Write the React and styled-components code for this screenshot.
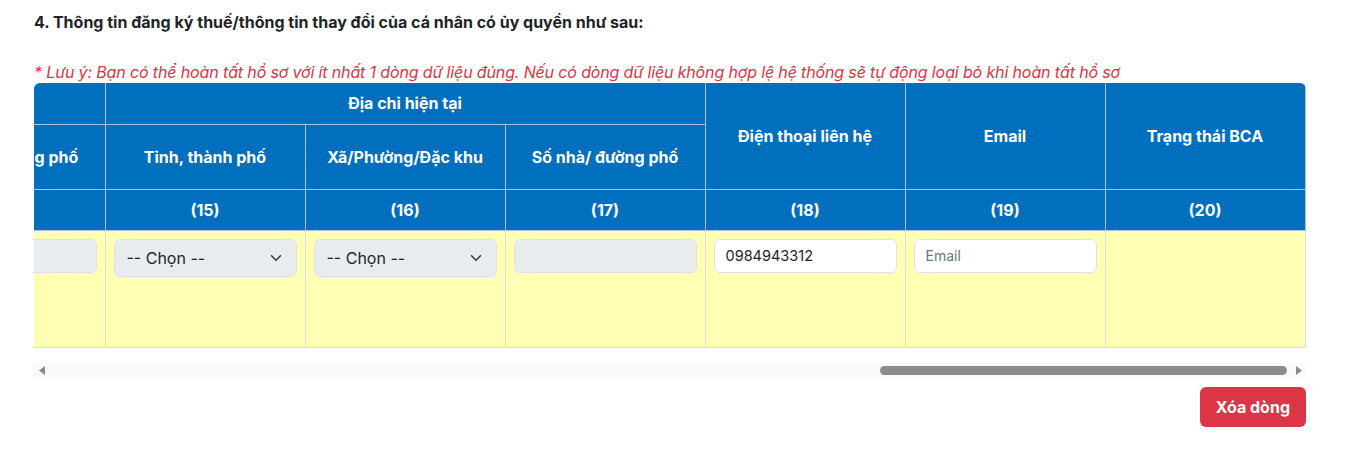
import React, { useLayoutEffect, useRef, useState } from "react";
import styled, { createGlobalStyle } from "styled-components";

const Global = createGlobalStyle`
  html, body { margin: 0; padding: 0; background: #fff; }
  body { font-family: Inter, "Noto Sans", "Liberation Sans", sans-serif; color: #212529; }
  * { box-sizing: border-box; }
`;

const Page = styled.div`
  padding: 12px 45px 20px 34px;
`;

const Title = styled.div`
  font-size: 16px;
  font-weight: 700;
  line-height: 20px;
  color: #212529;
`;

const Note = styled.div`
  margin-top: 30px;
  margin-bottom: 1px;
  font-size: 16px;
  font-style: italic;
  line-height: 20px;
  letter-spacing: -0.14px;
  color: #dc3545;
`;

const Scroller = styled.div`
  overflow-x: auto;
  border-radius: 6px 6px 0 0;
  scrollbar-width: none;
  &::-webkit-scrollbar { display: none; }
`;

const Table = styled.table`
  border-collapse: collapse;
  table-layout: fixed;
  width: max-content;
  margin-bottom: 15px;
`;

const Th = styled.th`
  background: #006fbe;
  color: #fff;
  font-size: 16px;
  font-weight: 700;
  text-align: center;
  vertical-align: middle;
  border: 1px solid #abc3da;
  padding: 4px 8px;
  height: ${(p) => p.$h}px;
  white-space: nowrap;
  &:first-child { border-left: none; }
`;

const HeadRow = styled.tr`
  &:first-child th { border-top: none; }
`;

const Td = styled.td`
  background: #ffffb4;
  border: 1px solid #dedede;
  border-top-color: #aab8cc;
  padding: 8px;
  vertical-align: top;
  height: 117px;
  font-size: 14px;
  &:first-child { border-left: none; }
`;

const Field = styled.input`
  display: block;
  width: 100%;
  height: 34px;
  padding: 0 11px;
  font-family: Inter, "Noto Sans", sans-serif;
  font-size: 14.5px;
  color: #212529;
  background: ${(p) => (p.disabled ? "#e9ecef" : "#fff")};
  border: 1px solid #dee2e6;
  border-radius: 6px;
  outline: none;
  &::placeholder { color: #6c757d; font-size: 14px; }
`;

const SelectBox = styled.div`
  display: flex;
  align-items: center;
  justify-content: space-between;
  height: 38px;
  padding: 0 14px 0 12px;
  font-size: 16px;
  color: #212529;
  background: #e9ecef;
  border: 1px solid #dee2e6;
  border-radius: 6px;
`;

const ScrollTrack = styled.div`
  display: flex;
  align-items: center;
  height: 16px;
  background: #fafafa;
`;

const ScrollArrow = styled.div`
  flex: 0 0 15px;
  display: flex;
  align-items: center;
  justify-content: center;
`;

const ScrollRail = styled.div`
  flex: 1;
  display: flex;
  padding: 0 4px 0 0;
`;

const ScrollThumb = styled.div`
  height: 9px;
  border-radius: 5px;
  background: #8c8c8c;
`;

const ActionBar = styled.div`
  display: flex;
  justify-content: flex-end;
  margin-top: 8px;
`;

const DangerButton = styled.button`
  height: 40px;
  padding: 0 16px;
  font-family: Inter, "Noto Sans", sans-serif;
  font-size: 16px;
  font-weight: 700;
  color: #fff;
  background: #dc3545;
  border: none;
  border-radius: 6px;
`;

const Chevron = () => (
  <svg width="12" height="12" viewBox="0 0 16 16" fill="none">
    <path d="M2 5l6 6 6-6" stroke="#343a40" strokeWidth="2" strokeLinecap="round" strokeLinejoin="round" />
  </svg>
);

const Select = () => (
  <SelectBox>
    <span>-- Chọn --</span>
    <Chevron />
  </SelectBox>
);

const Tri = ({ dir }) => (
  <svg width="6" height="9" viewBox="0 0 6 9">
    <path d={dir === "left" ? "M6 0L0 4.5 6 9z" : "M0 0l6 4.5L0 9z"} fill="#8a8a8a" />
  </svg>
);

const leading = [
  "Họ và tên", "Mã số thuế", "Ngày sinh", "Giới tính", "Quốc tịch",
  "Loại giấy tờ", "Số giấy tờ", "Ngày cấp", "Nơi cấp", "Ghi chú",
];

export default function App() {
  const ref = useRef(null);
  const [bar, setBar] = useState({ size: 0.33, pos: 1 });

  useLayoutEffect(() => {
    const el = ref.current;
    if (!el) return;
    el.scrollLeft = el.scrollWidth;
    const update = () => {
      const max = el.scrollWidth - el.clientWidth;
      setBar({
        size: el.clientWidth / el.scrollWidth,
        pos: max > 0 ? el.scrollLeft / max : 0,
      });
    };
    update();
    el.addEventListener("scroll", update);
    return () => el.removeEventListener("scroll", update);
  }, []);

  const widths = [71, ...Array(19).fill(200)];

  return (
    <>
      <Global />
      <Page>
        <Title>4. Thông tin đăng ký thuế/thông tin thay đổi của cá nhân có ủy quyền như sau:</Title>
        <Note>* Lưu ý: Bạn có thể hoàn tất hồ sơ với ít nhất 1 dòng dữ liệu đúng. Nếu có dòng dữ liệu không hợp lệ hệ thống sẽ tự động loại bỏ khi hoàn tất hồ sơ</Note>
        <Scroller ref={ref}>
          <Table>
            <colgroup>
              {widths.map((w, i) => (
                <col key={i} style={{ width: w }} />
              ))}
            </colgroup>
            <thead>
              <HeadRow>
                <Th $h={41} rowSpan={2}>STT</Th>
                {leading.map((l) => (
                  <Th key={l} $h={41} rowSpan={2}>{l}</Th>
                ))}
                <Th $h={41} colSpan={3}>Địa chỉ thường trú</Th>
                <Th $h={41} colSpan={3}>Địa chỉ hiện tại</Th>
                <Th $h={41} rowSpan={2}>Điện thoại liên hệ</Th>
                <Th $h={41} rowSpan={2}>Email</Th>
                <Th $h={41} rowSpan={2}>Trạng thái BCA</Th>
              </HeadRow>
              <HeadRow>
                <Th $h={65}>Tỉnh, thành phố</Th>
                <Th $h={65}>Xã/Phường/Đặc khu</Th>
                <Th $h={65}>Số nhà/ đường phố</Th>
                <Th $h={65}>Tỉnh, thành phố</Th>
                <Th $h={65}>Xã/Phường/Đặc khu</Th>
                <Th $h={65}>Số nhà/ đường phố</Th>
              </HeadRow>
              <HeadRow>
                {widths.map((_, i) => (
                  <Th key={i} $h={41}>({i + 1})</Th>
                ))}
              </HeadRow>
            </thead>
            <tbody>
              <tr>
                <Td>1</Td>
                {leading.map((l) => (
                  <Td key={l}><Field disabled /></Td>
                ))}
                <Td><Select /></Td>
                <Td><Select /></Td>
                <Td><Field disabled /></Td>
                <Td><Select /></Td>
                <Td><Select /></Td>
                <Td><Field disabled /></Td>
                <Td><Field defaultValue="0984943312" /></Td>
                <Td><Field placeholder="Email" /></Td>
                <Td />
              </tr>
            </tbody>
          </Table>
        </Scroller>
        <ScrollTrack>
          <ScrollArrow><Tri dir="left" /></ScrollArrow>
          <ScrollRail>
            <ScrollThumb
              style={{
                width: `${bar.size * 100}%`,
                marginLeft: `${bar.pos * (1 - bar.size) * 100}%`,
              }}
            />
          </ScrollRail>
          <ScrollArrow><Tri dir="right" /></ScrollArrow>
        </ScrollTrack>
        <ActionBar>
          <DangerButton>Xóa dòng</DangerButton>
        </ActionBar>
      </Page>
    </>
  );
}
